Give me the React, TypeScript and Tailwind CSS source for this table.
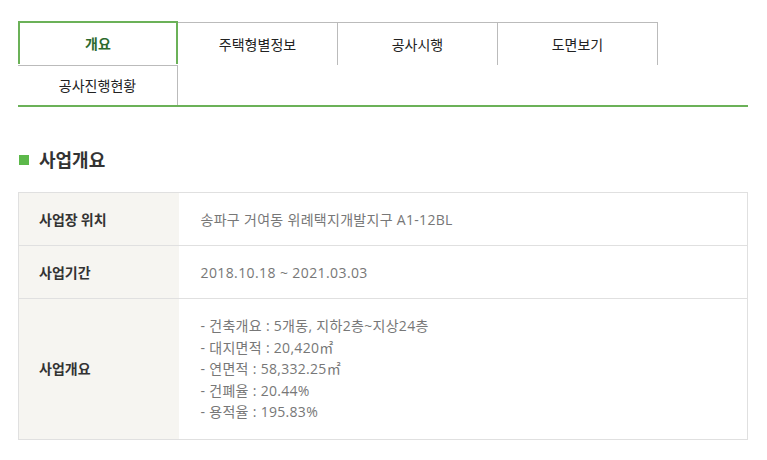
import React from "react";

const tabs = ["개요", "주택형별정보", "공사시행", "도면보기", "공사진행현황"];

const details = [
  "- 건축개요 : 5개동, 지하2층~지상24층",
  "- 대지면적 : 20,420㎡",
  "- 연면적 : 58,332.25㎡",
  "- 건폐율 : 20.44%",
  "- 용적율 : 195.83%",
];

const valueFont = { fontFamily: '"Open Sans", "Noto Sans CJK KR", sans-serif' };

const App: React.FC = () => {
  const active = 0;

  return (
    <div
      className="w-[767px] h-[460px] bg-white px-[18px] pt-[21px] text-[#333]"
      style={{ fontFamily: '"Noto Sans CJK KR", "Noto Sans", sans-serif' }}
    >
      {/* tab menu */}
      <ul className="flex flex-wrap w-[730px] border-b-2 border-[#6bb158]">
        {tabs.map((tab, i) => {
          const isActive = i === active;
          const secondRow = i >= 4;
          return (
            <li
              key={tab}
              className={`w-[160px] flex items-center justify-center text-[14px] ${
                secondRow ? "h-[40px]" : "h-[43px]"
              } ${
                isActive
                  ? "border-2 border-b-0 border-[#6bb158] text-[#2d6a2d] font-bold"
                  : secondRow
                  ? "border-t border-r border-[#bbbbbb] text-[#222]"
                  : "border-t border-r border-[#bbbbbb] mt-[1px] h-[42px] text-[#222]"
              }`}
            >
              {tab}
            </li>
          );
        })}
      </ul>

      {/* section title */}
      <div className="flex items-center mt-[40px] h-[25px]">
        <span className="w-[10px] h-[10px] bg-[#5cb84a] ml-[1px] mr-[10px]" />
        <h2 className="text-[18px] font-bold text-[#333] leading-[25px]">사업개요</h2>
      </div>

      {/* overview table */}
      <table className="mt-[20px] w-[730px] border border-[#e0e0e0] border-collapse">
        <tbody>
          <tr className="h-[53px] border-b border-[#e0e0e0]">
            <th className="w-[160px] bg-[#f6f5f1] text-left pl-[20px] text-[14px] font-bold text-[#333]">
              사업장 위치
            </th>
            <td
              className="pl-[22px] text-[14px] text-[#777] tracking-[0.3px]"
              style={valueFont}
            >
              송파구 거여동 위례택지개발지구 A1-12BL
            </td>
          </tr>
          <tr className="h-[53px] border-b border-[#e0e0e0]">
            <th className="w-[160px] bg-[#f6f5f1] text-left pl-[20px] text-[14px] font-bold text-[#333]">
              사업기간
            </th>
            <td
              className="pl-[22px] text-[14px] text-[#777] tracking-[0.4px]"
              style={valueFont}
            >
              2018.10.18 ~ 2021.03.03
            </td>
          </tr>
          <tr className="h-[140px]">
            <th className="w-[160px] bg-[#f6f5f1] text-left pl-[20px] text-[14px] font-bold text-[#333]">
              사업개요
            </th>
            <td
              className="pl-[22px] py-[16px] text-[14px] text-[#777] leading-[21.5px] tracking-[0.3px]"
              style={valueFont}
            >
              {details.map((d) => (
                <p key={d}>{d}</p>
              ))}
            </td>
          </tr>
        </tbody>
      </table>
    </div>
  );
};

export default App;
